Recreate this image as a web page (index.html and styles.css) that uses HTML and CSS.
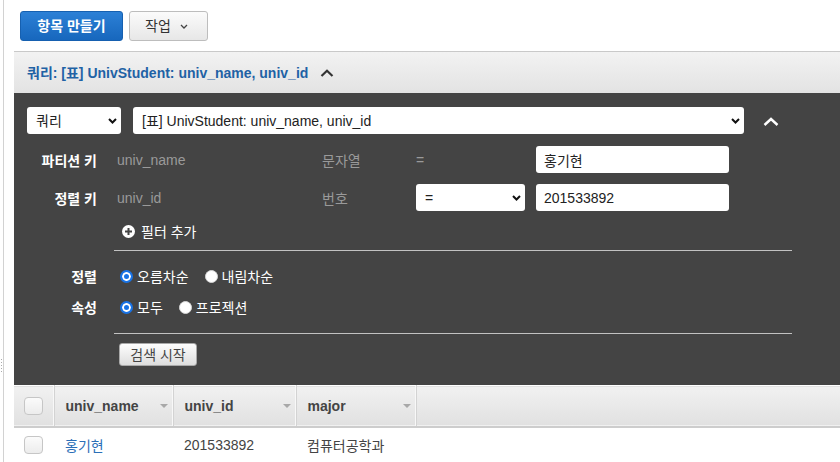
FILE: index.html
```html
<!DOCTYPE html>
<html lang="ko">
<head>
<meta charset="utf-8">
<title>DynamoDB 항목</title>
<link rel="stylesheet" href="styles.css">
</head>
<body>
<div class="page">
  <span class="grip"></span>
  <div class="toolbar">
    <button class="btn btn-primary">항목 만들기</button>
    <button class="btn btn-default">작업 <svg class="caret-down" width="8" height="5" viewBox="0 0 8 5"><path d="M1 1 L4 4 L7 1" fill="none" stroke="#444" stroke-width="1.3"/></svg></button>
  </div>

  <div class="query-header">
    <span class="query-title">쿼리: [표] UnivStudent: univ_name, univ_id</span>
    <svg class="chev-up dark" width="14" height="8" viewBox="0 0 14 8"><path d="M1.5 7 L7 1.8 L12.5 7" fill="none" stroke="#333" stroke-width="2.2"/></svg>
  </div>

  <div class="query-panel">
    <div class="select-row">
      <div class="select s-type"><span>쿼리</span><svg width="9" height="6" viewBox="0 0 9 6"><path d="M1 1 L4.5 4.5 L8 1" fill="none" stroke="#111" stroke-width="2"/></svg></div>
      <div class="select s-table"><span>[표] UnivStudent: univ_name, univ_id</span><svg width="9" height="6" viewBox="0 0 9 6"><path d="M1 1 L4.5 4.5 L8 1" fill="none" stroke="#111" stroke-width="2"/></svg></div>
      <svg class="chev-up light" width="16" height="9" viewBox="0 0 16 9"><path d="M1.5 8 L8 2 L14.5 8" fill="none" stroke="#fff" stroke-width="2.4"/></svg>
    </div>

    <div class="key-grid">
      <div class="key-label">파티션 키</div>
      <div class="muted">univ_name</div>
      <div class="muted">문자열</div>
      <div class="muted op">=</div>
      <input class="field" type="text" value="홍기현">

      <div class="key-label">정렬 키</div>
      <div class="muted">univ_id</div>
      <div class="muted">번호</div>
      <div class="select s-op"><span>=</span><svg width="9" height="6" viewBox="0 0 9 6"><path d="M1 1 L4.5 4.5 L8 1" fill="none" stroke="#111" stroke-width="2"/></svg></div>
      <input class="field" type="text" value="201533892">
    </div>

    <div class="add-filter">
      <svg width="13" height="13" viewBox="0 0 13 13"><circle cx="6.5" cy="6.5" r="6.5" fill="#fff"/><path d="M6.5 3 V10 M3 6.5 H10" stroke="#444" stroke-width="2"/></svg>
      <span>필터 추가</span>
    </div>

    <div class="divider"></div>

    <div class="option-grid">
      <div class="opt-label">정렬</div>
      <div class="radios">
        <label class="radio-item"><span class="radio checked"></span>오름차순</label>
        <label class="radio-item"><span class="radio"></span>내림차순</label>
      </div>
      <div class="opt-label">속성</div>
      <div class="radios">
        <label class="radio-item"><span class="radio checked"></span>모두</label>
        <label class="radio-item"><span class="radio"></span>프로젝션</label>
      </div>
    </div>

    <div class="divider second"></div>

    <button class="btn btn-search">검색 시작</button>
  </div>

  <table class="results">
    <thead>
      <tr>
        <th class="col-check"><span class="checkbox"></span></th>
        <th class="col-name"><div class="th-inner">univ_name<i class="sort"></i></div></th>
        <th class="col-id"><div class="th-inner">univ_id<i class="sort"></i></div></th>
        <th class="col-major"><div class="th-inner">major<i class="sort"></i></div></th>
        <th class="col-rest"></th>
      </tr>
    </thead>
    <tbody>
      <tr>
        <td class="col-check"><span class="checkbox"></span></td>
        <td><a class="link" href="#">홍기현</a></td>
        <td>201533892</td>
        <td>컴퓨터공학과</td>
        <td></td>
      </tr>
    </tbody>
  </table>
</div>
</body>
</html>
```
FILE: styles.css
```css
* { box-sizing: border-box; }

html, body {
  margin: 0;
  padding: 0;
  background: #fff;
  height: 100%;
  overflow: hidden;
}

body {
  font-family: "Liberation Sans", "Noto Sans CJK KR", Arial, sans-serif;
  font-size: 14px;
  color: #333;
}

.page {
  position: relative;
  margin-left: 3px;
  border-left: 1px solid #d2d2d2;
  padding-left: 10px;
  min-height: 100%;
}

.grip {
  position: absolute;
  left: -4px;
  top: 358px;
  width: 3px;
  height: 15px;
  background-image: radial-gradient(circle, #aaa 0.8px, transparent 1px);
  background-size: 3px 3px;
}

/* toolbar */
.toolbar {
  display: flex;
  gap: 6px;
  padding: 11px 0 10px 6px;
}

.btn {
  font-family: inherit;
  font-size: 14px;
  border-radius: 3px;
  cursor: pointer;
  line-height: 18px;
}

.btn-primary {
  height: 30px;
  width: 103px;
  padding: 0;
  color: #fff;
  font-weight: bold;
  border: 1px solid #1660b0;
  background: linear-gradient(#2c80d6, #1767bd);
}

.btn-default {
  height: 30px;
  width: 79px;
  padding: 0 0 0 15px;
  display: flex;
  align-items: center;
  gap: 9px;
  color: #333;
  border: 1px solid #bdbdbd;
  background: linear-gradient(#fbfbfb, #e7e7e7);
}

/* query header */
.query-header {
  height: 42px;
  border-top: 1px solid #c9c9c9;
  background: linear-gradient(#f2f2f2, #e3e3e3);
  display: flex;
  align-items: center;
  padding: 0 0 0 13px;
  gap: 12px;
}

.query-title {
  font-weight: bold;
  color: #1f62a5;
  line-height: 20px;
}

.chev-up.dark { margin-top: 1px; }

/* dark panel */
.query-panel {
  background: #444;
  padding: 14px 0 19px 13px;
}

.select-row {
  display: flex;
  align-items: center;
  height: 27px;
}

.select {
  height: 27px;
  background: #fff;
  border-radius: 3px;
  display: flex;
  align-items: center;
  justify-content: space-between;
  padding: 0 4px 0 9px;
  color: #222;
  line-height: 18px;
}

.s-type { width: 94px; }
.s-table { width: 611px; margin-left: 12px; }
.s-op { width: 109px; }

.chev-up.light { margin-left: 19px; margin-top: 1px; }

.key-grid {
  display: grid;
  grid-template-columns: 90px 205px 94px 120px 193px;
  grid-auto-rows: 27px;
  row-gap: 11px;
  align-items: center;
  margin-top: 12px;
}

.key-label {
  text-align: right;
  padding-right: 20px;
  font-weight: bold;
  color: #fff;
}

.muted { color: #9a9a9a; }

.field {
  height: 27px;
  width: 193px;
  border: none;
  border-radius: 3px;
  padding: 0 8px;
  font-family: inherit;
  font-size: 14px;
  color: #222;
  background: #fff;
  outline: none;
}

.add-filter {
  display: flex;
  align-items: center;
  gap: 6px;
  height: 20px;
  margin-top: 10px;
  padding-left: 95px;
  color: #fff;
}

.divider {
  margin-top: 9px;
  margin-left: 87px;
  width: 678px;
  height: 1px;
  background: #c2c2c2;
}

.divider.second { margin-top: 16px; }

.option-grid {
  display: grid;
  grid-template-columns: 70px auto;
  grid-auto-rows: 20px;
  column-gap: 23px;
  row-gap: 11px;
  align-items: center;
  margin-top: 15px;
}

.opt-label {
  text-align: right;
  font-weight: bold;
  color: #fff;
}

.radios {
  display: flex;
  gap: 16px;
}

.radio-item {
  display: flex;
  align-items: center;
  gap: 4px;
  color: #fff;
}

.radio {
  width: 13px;
  height: 13px;
  border-radius: 50%;
  background: #fff;
  border: 1px solid #d8d8d8;
}

.radio.checked {
  background: #1873e6;
  border: 2px solid #1873e6;
  box-shadow: inset 0 0 0 2px #fff;
}

.btn-search {
  display: block;
  margin: 9px 0 0 92px;
  height: 23px;
  width: 78px;
  padding: 0;
  color: #444;
  border: 1px solid #a9a9a9;
  border-radius: 3px;
  background: linear-gradient(#fdfdfd, #dedede);
}

/* results table */
.results {
  width: 100%;
  border-collapse: collapse;
  table-layout: fixed;
}

.results thead tr {
  background: linear-gradient(#f1f1f1, #e1e1e1);
  border-top: 1px solid #fff;
  border-bottom: 2px solid #cdcdcd;
}

.results th {
  height: 41px;
  padding: 0;
  text-align: left;
  font-weight: bold;
  color: #444;
  border-right: 1px solid #d3d3d3;
  box-shadow: inset -1px 0 0 #f8f8f8;
}

.results th.col-rest { border-right: none; box-shadow: none; }

.col-check { width: 40px; }
.col-name { width: 119px; }
.col-id { width: 123px; }
.col-major { width: 120px; }

.th-inner {
  display: flex;
  align-items: center;
  justify-content: space-between;
  padding: 0 5px 0 11px;
}

.sort {
  width: 0;
  height: 0;
  border-left: 4px solid transparent;
  border-right: 4px solid transparent;
  border-top: 4px solid #a8a8a8;
}

.results td {
  height: 35px;
  padding: 0 0 0 11px;
  color: #444;
}

.results .col-check { padding: 0 0 0 10px; }

.checkbox {
  display: block;
  width: 19px;
  height: 18px;
  border: 1px solid #c6c6c6;
  border-radius: 4px;
  background: linear-gradient(#fbfbfb, #ececec);
}

.link {
  color: #2b6fb7;
  text-decoration: none;
}
```
